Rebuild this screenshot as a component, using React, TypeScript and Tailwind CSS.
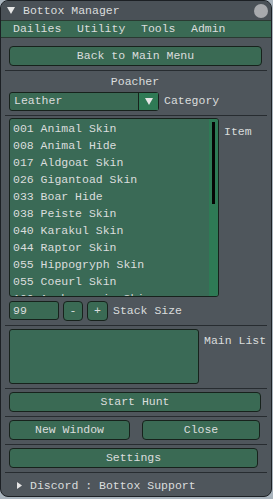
import React from "react";

const items = [
  "001 Animal Skin",
  "008 Animal Hide",
  "017 Aldgoat Skin",
  "026 Gigantoad Skin",
  "033 Boar Hide",
  "038 Peiste Skin",
  "040 Karakul Skin",
  "044 Raptor Skin",
  "055 Hippogryph Skin",
  "055 Coeurl Skin",
  "100 Archaeornis Skin",
];

function Btn({ children, className = "" }: { children: React.ReactNode; className?: string }) {
  return (
    <div
      className={`flex h-[20px] items-center justify-center rounded-[4px] border border-[#17221c] bg-[#3a6a54] ${className}`}
    >
      {children}
    </div>
  );
}

function Sep({ className = "" }: { className?: string }) {
  return <div className={`mx-[-4px] h-px bg-[#272c30] ${className}`} />;
}

export default function App() {
  return (
    <div className="h-[499px] w-[273px] bg-[#a9b4bd]">
      <div className="flex h-[497px] w-[272px] flex-col overflow-hidden rounded-[8px] border border-[#1c2024] bg-[#4f565c] font-['Liberation_Mono',monospace] text-[11.5px] leading-none text-[#dadddd]">
        {/* title */}
        <div className="flex h-[19px] shrink-0 items-center bg-[#4a5157] pl-[6px] pr-[3px]">
          <svg width="8" height="7" viewBox="0 0 8 7" className="mr-[8px]">
            <path d="M0 0 H8 L4 7 Z" fill="#e6e6e6" />
          </svg>
          <span>Bottox Manager</span>
          <div className="ml-auto h-[14px] w-[14px] rounded-full bg-[#a8aaad]" />
        </div>
        {/* menu */}
        <div className="flex h-[18px] shrink-0 items-center border-y border-[#2a3a32] bg-[#3a6a54] pl-[12px]">
          <span className="w-[64px]">Dailies</span>
          <span className="w-[64px]">Utility</span>
          <span className="w-[50px]">Tools</span>
          <span>Admin</span>
        </div>

        <div className="flex flex-col px-[8px]">
          <Btn className="mt-[8px] mr-[1px]">Back to Main Menu</Btn>
          <Sep className="mt-[4px]" />
          <div className="mt-[5px] pr-[2px] text-center">Poacher</div>
          {/* combo */}
          <div className="mt-[4px] flex items-center">
            <div className="flex h-[19px] w-[150px] items-center rounded-[3px] border border-[#17221c] bg-[#3a6a54]">
              <span className="flex-1 pl-[4px]">Leather</span>
              <div className="flex h-full w-[20px] items-center justify-center border-l border-[#17221c] bg-[#2f7a55]">
                <svg width="8" height="7" viewBox="0 0 8 7">
                  <path d="M0 0 H8 L4 7 Z" fill="#e6e6e6" />
                </svg>
              </div>
            </div>
            <span className="ml-[5px]">Category</span>
          </div>
          <Sep className="mt-[4px]" />
          {/* list */}
          <div className="mt-[2px] flex items-start">
            <div className="flex h-[179px] w-[210px] overflow-hidden rounded-[3px] border border-[#17221c] bg-[#3a6a56]">
              <div className="flex-1 overflow-hidden pl-[3px] pt-[4px]">
                {items.map((t) => (
                  <div key={t} className="h-[17px] whitespace-nowrap leading-[12px]">
                    {t}
                  </div>
                ))}
              </div>
              <div className="flex w-[9px] justify-center bg-[#2e7a55] pt-[3px]">
                <div className="h-[82px] w-[3px] bg-[#050505]" />
              </div>
            </div>
            <span className="ml-[5px] mt-[8px]">Item</span>
          </div>
          {/* stack */}
          <div className="mt-[4px] flex items-center">
            <div className="flex h-[19px] w-[50px] items-center rounded-[3px] border border-[#17221c] bg-[#3a6a54] pl-[3px]">
              99
            </div>
            <Btn className="ml-[4px] h-[19px] w-[20px]">-</Btn>
            <Btn className="ml-[4px] h-[19px] w-[21px]">+</Btn>
            <span className="ml-[5px]">Stack Size</span>
          </div>
          <Sep className="mt-[4px]" />
          <div className="mt-[3px] flex items-start">
            <div className="h-[55px] w-[190px] shrink-0 rounded-[3px] border border-[#17221c] bg-[#3a6a56]" />
            <span className="ml-[5px] mt-[6px] whitespace-nowrap">Main List</span>
          </div>
          <Sep className="mt-[4px]" />
          <Btn className="mt-[3px] mr-[2px]">Start Hunt</Btn>
          <Sep className="mt-[4px]" />
          <div className="mt-[3px] flex">
            <Btn className="w-[121px]">New Window</Btn>
            <Btn className="ml-[12px] w-[118px]">Close</Btn>
          </div>
          <Sep className="mt-[4px]" />
          <Btn className="mt-[3px] mr-[5px]">Settings</Btn>
          <Sep className="mt-[4px]" />
          <div className="mt-[7px] flex items-center pl-[8px]">
            <svg width="5" height="7" viewBox="0 0 5 7" className="mr-[8px]">
              <path d="M0 0 V7 L5 3.5 Z" fill="#e6e6e6" />
            </svg>
            <span>Discord : Bottox Support</span>
          </div>
        </div>
      </div>
    </div>
  );
}
